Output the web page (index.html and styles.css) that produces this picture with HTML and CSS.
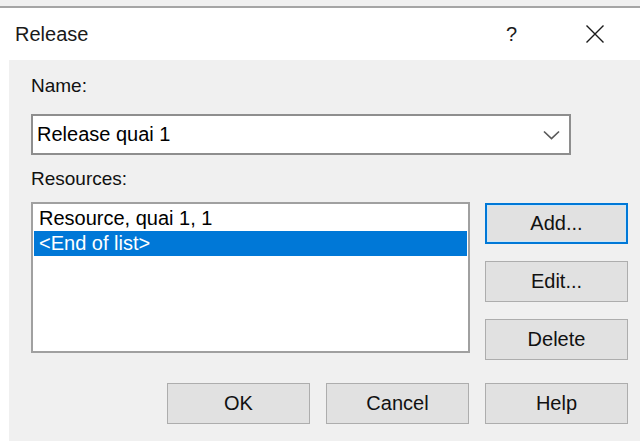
FILE: index.html
```html
<!DOCTYPE html>
<html lang="en">
<head>
<meta charset="utf-8">
<title>Release</title>
<link rel="stylesheet" href="styles.css">
</head>
<body>
<div class="window">
  <div class="frame-top"></div>
  <header class="titlebar">
    <span class="title">Release</span>
    <div class="caption-buttons">
      <span class="cap-help">?</span>
      <svg class="cap-close" width="20" height="18" viewBox="0 0 20 18" aria-hidden="true">
        <path d="M1.5 0.5 L18.5 17.5 M18.5 0.5 L1.5 17.5" stroke="#1a1a1a" stroke-width="1.4" fill="none"/>
      </svg>
    </div>
  </header>
  <main class="client">
    <label class="field-label">Name:</label>
    <div class="combo">
      <span class="combo-text">Release quai 1</span>
      <svg class="combo-arrow" width="17" height="10" viewBox="0 0 17 10" aria-hidden="true">
        <polyline points="1,1.5 8.5,8.5 16,1.5" stroke="#5a5a5a" stroke-width="1.7" fill="none"/>
      </svg>
    </div>
    <label class="field-label">Resources:</label>
    <div class="resources">
      <ul class="listbox">
        <li class="item">Resource, quai 1, 1</li>
        <li class="item selected">&lt;End of list&gt;</li>
      </ul>
      <div class="side-buttons">
        <button class="btn default">Add...</button>
        <button class="btn">Edit...</button>
        <button class="btn">Delete</button>
      </div>
    </div>
    <div class="footer">
      <button class="btn">OK</button>
      <button class="btn">Cancel</button>
      <button class="btn">Help</button>
    </div>
  </main>
</div>
</body>
</html>
```
FILE: styles.css
```css
html, body {
  margin: 0;
  padding: 0;
}

body {
  width: 640px;
  height: 441px;
  overflow: hidden;
  background: #ffffff;
  font-family: "Liberation Sans", Arial, sans-serif;
  color: #000;
}

.window {
  display: flex;
  flex-direction: column;
  height: 441px;
}

/* strip of the parent window above the dialog frame */
.frame-top {
  height: 6px;
  background: #f0f0f0;
  border-bottom: 2px solid #a5a5a5;
  flex: none;
}

.titlebar {
  height: 52px;
  flex: none;
  display: flex;
  align-items: center;
  justify-content: space-between;
  background: #ffffff;
  padding-left: 15px;
}

.title {
  font-size: 20px;
  color: #1a1a1a;
}

.caption-buttons {
  display: flex;
  align-items: center;
  padding-right: 35px;
}

.cap-help {
  font-size: 20px;
  color: #1a1a1a;
  margin-right: 68px;
}

.client {
  flex: 1;
  margin-left: 9px;
  background: #f0f0f0;
  padding: 16px 12px 0 22px;
  display: flex;
  flex-direction: column;
}

.field-label {
  font-size: 19px;
  line-height: 20px;
  color: #111;
}

.combo {
  margin-top: 18px;
  width: 540px;
  height: 41px;
  box-sizing: border-box;
  border: 2px solid #8e8e8e;
  background: #fff;
  display: flex;
  align-items: center;
  justify-content: space-between;
  padding: 0 9px 0 4px;
  margin-bottom: 14px;
}

.combo-text {
  font-size: 20px;
  line-height: 37px;
}

.resources {
  margin-top: 13px;
  display: flex;
  gap: 15px;
  height: 158px;
}

.listbox {
  margin: 0;
  list-style: none;
  width: 439px;
  height: 151px;
  box-sizing: border-box;
  border: 2px solid #a0a0a0;
  background: #fff;
  padding: 2px 1px 0 1px;
}

.item {
  font-size: 20px;
  line-height: 25px;
  height: 25px;
  padding-left: 5px;
  white-space: nowrap;
}

.item.selected {
  background: #0078d7;
  color: #fff;
}

.side-buttons {
  display: flex;
  flex-direction: column;
  gap: 17px;
  padding-top: 1px;
}

.btn {
  width: 143px;
  height: 41px;
  box-sizing: border-box;
  border: 1px solid #adadad;
  background: #e1e1e1;
  font-family: "Liberation Sans", Arial, sans-serif;
  font-size: 20px;
  color: #111;
  padding: 0;
  margin: 0;
}

.btn.default {
  border: 2px solid #0078d7;
  box-shadow: inset 0 0 0 1px #cde6f7;
}

.footer {
  margin-top: 23px;
  display: flex;
  justify-content: flex-end;
  gap: 16px;
}
```
